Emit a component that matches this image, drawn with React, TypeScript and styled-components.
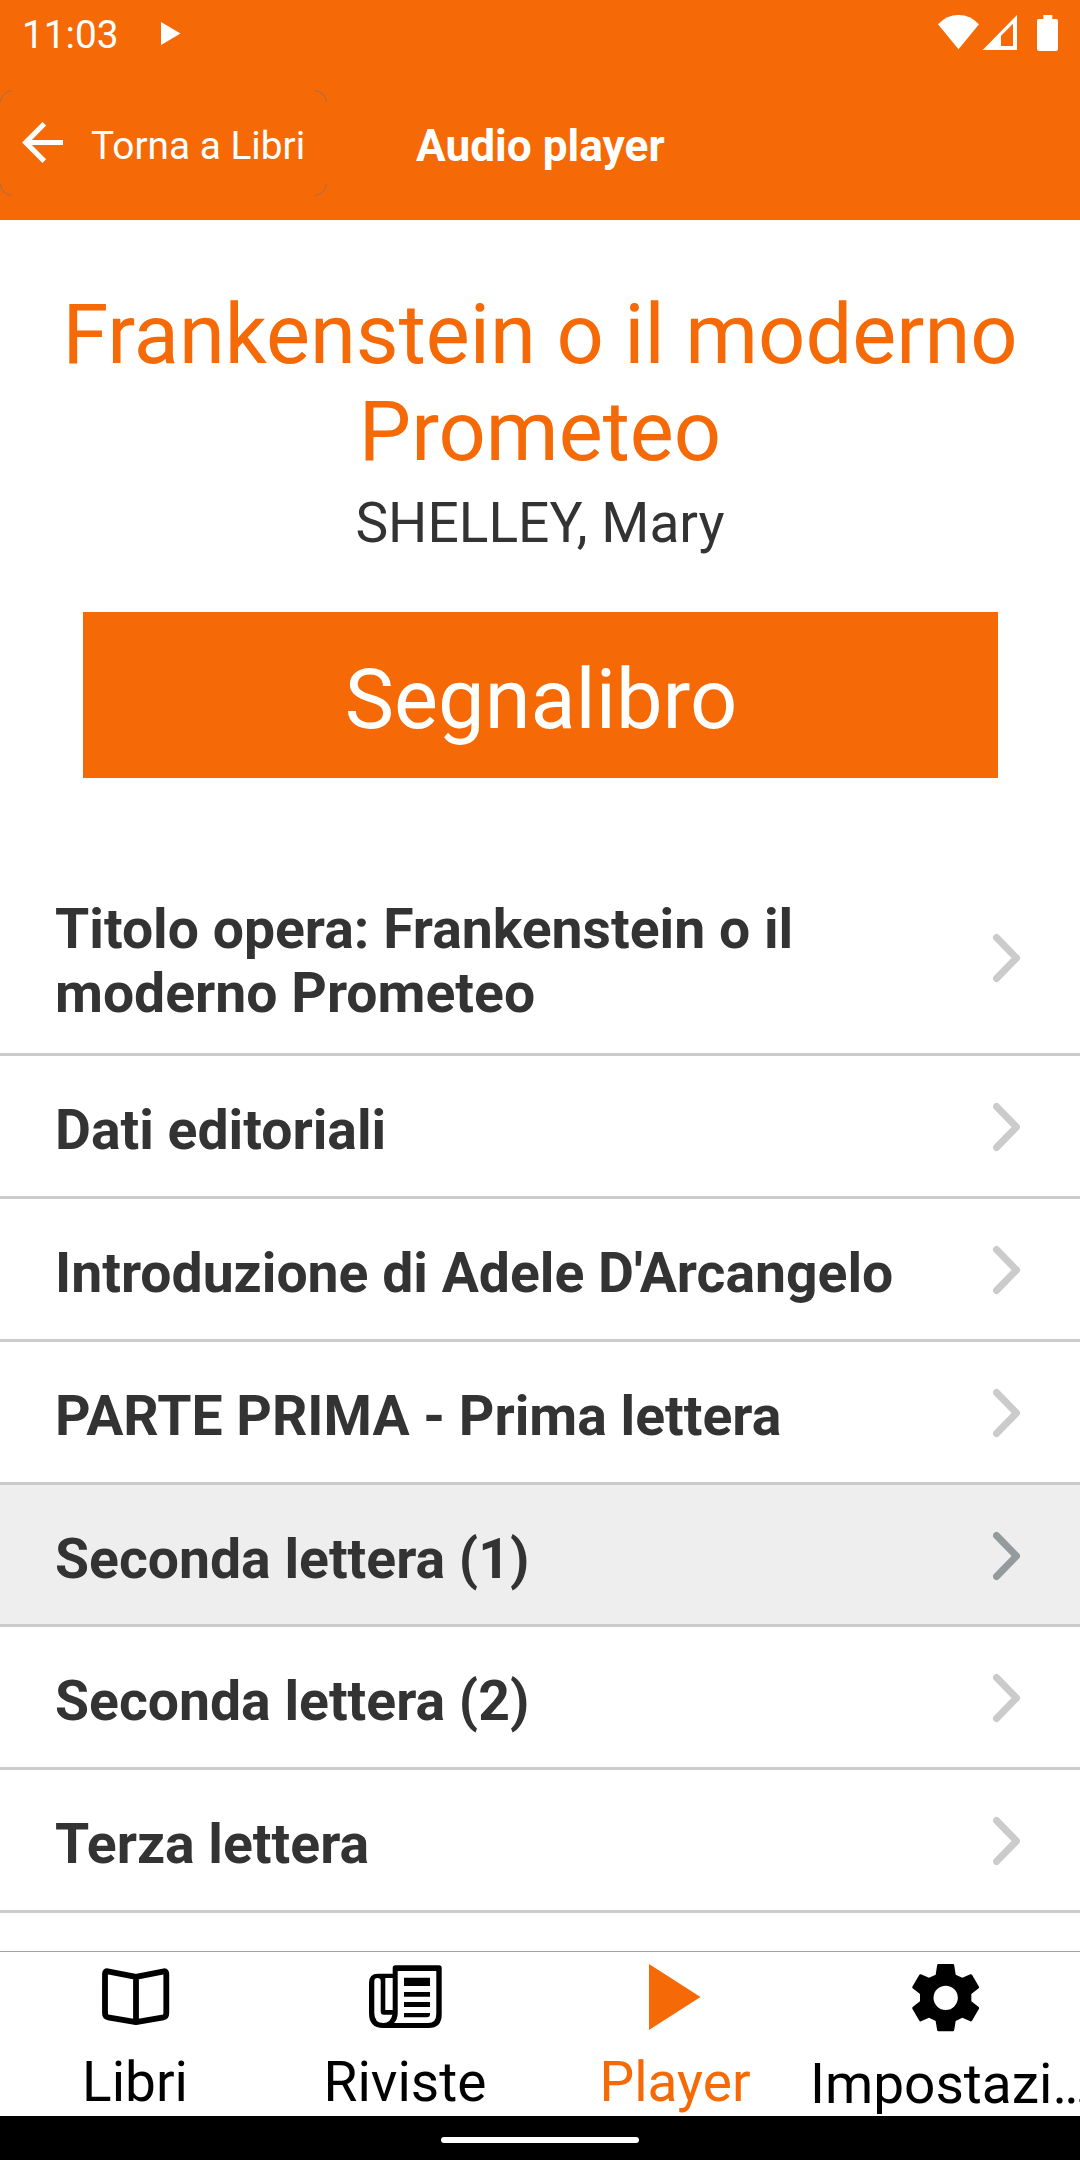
import React from "react";
import styled, { createGlobalStyle } from "styled-components";

const ORANGE = "#f56a06";

const GlobalStyle = createGlobalStyle`
  *, *::before, *::after { box-sizing: border-box; }
  body { margin: 0; background: #fff; font-family: Roboto, "Noto Sans", sans-serif; }
  h1, h2, p, ul { margin: 0; padding: 0; }
  button { border: 0; background: none; padding: 0; font: inherit; color: inherit; }
  svg { display: block; flex: none; }
`;

const Screen = styled.div`
  width: 1080px;
  height: 2160px;
  display: flex;
  flex-direction: column;
  overflow: hidden;
  background: #fff;
`;

const StatusBar = styled.div`
  height: 66px;
  flex: none;
  display: flex;
  align-items: flex-start;
  padding: 12px 22px 0;
  background: ${ORANGE};
  color: #fff;
`;

const Clock = styled.span`
  width: 139px;
  font-size: 38.8px;
  line-height: 45px;
`;

const StatusIcons = styled.div`
  margin-left: auto;
`;

const Header = styled.header`
  height: 154px;
  flex: none;
  display: flex;
  align-items: center;
  background: ${ORANGE};
  color: #fff;
`;

const BackButton = styled.button`
  position: relative;
  width: 327px;
  height: 106px;
  display: flex;
  align-items: center;
  padding-left: 22px;
  font-size: 38.8px;
  line-height: 46px;
`;

const ButtonCorners = styled.svg`
  position: absolute;
  inset: 0;
`;

const BackLabel = styled.span`
  padding: 5px 0 0 28px;
  white-space: nowrap;
`;

const ScreenTitle = styled.h1`
  margin-left: 89px;
  padding-top: 6px;
  font-size: 44.2px;
  line-height: 52px;
  font-weight: 700;
`;

const Content = styled.main`
  flex: 1;
  min-height: 0;
  overflow: hidden;
`;

const BookInfo = styled.section`
  height: 641px;
  padding: 66px 50px 0;
  display: flex;
  flex-direction: column;
  align-items: center;
  text-align: center;
`;

const BookTitle = styled.h2`
  color: ${ORANGE};
  font-size: 83px;
  line-height: 97px;
  font-weight: 400;
`;

const Author = styled.p`
  margin-top: 11px;
  color: #333;
  font-size: 55.1px;
  line-height: 65px;
`;

const BookmarkButton = styled.button`
  width: 915px;
  height: 166px;
  flex: none;
  margin-top: 56px;
  padding: 8px 0 0 2px;
  background: ${ORANGE};
  color: #fff;
  font-size: 83px;
  line-height: 97px;
`;

const ChapterList = styled.ul`
  list-style: none;
`;

const ChapterRow = styled.li<{ $height: number; $active?: boolean }>`
  height: ${({ $height }) => $height}px;
  display: flex;
  align-items: center;
  justify-content: space-between;
  padding: 0 59px 0 55px;
  border-bottom: 3px solid #cbcbcb;
  background: ${({ $active }) => ($active ? "#eee" : "#fff")};
  color: ${({ $active }) => ($active ? "#959a9c" : "#cbcbcb")};

  svg { margin-top: 2px; }
`;

const ChapterTitle = styled.span`
  width: 870px;
  padding-top: 10px;
  color: #333;
  font-size: 55.3px;
  line-height: 64px;
  font-weight: 700;
`;

const TabBar = styled.nav`
  height: 165px;
  flex: none;
  display: grid;
  grid-template-columns: repeat(4, 270px);
  border-top: 1px solid #a2a2a2;
  background: #fff;
`;

const Tab = styled.button<{ $active?: boolean; $drop?: number }>`
  min-width: 0;
  display: flex;
  flex-direction: column;
  align-items: center;
  color: ${({ $active }) => ($active ? ORANGE : "#000")};
  font-size: 55px;
  line-height: 64px;

  svg { margin-bottom: ${({ $drop = 0 }) => 14 + $drop}px; }
`;

const TabLabel = styled.span`
  max-width: 100%;
  white-space: nowrap;
`;

const SystemBar = styled.div`
  height: 44px;
  flex: none;
  padding-top: 21px;
  background: #000;
`;

const HomeIndicator = styled.div`
  width: 198px;
  height: 6px;
  margin: 0 auto;
  border-radius: 3px;
  background: #fff;
`;

const Chevron = () => (
  <svg width="28" height="50" viewBox="0 0 28 50" fill="none" stroke="currentColor" strokeWidth="7" strokeLinecap="round" strokeLinejoin="round">
    <path d="M3.500 4.500 23.500 25 3.500 45.500" />
  </svg>
);

const BookIcon = () => (
  <svg width="72" height="84" viewBox="0 0 72 84" fill="none" stroke="currentColor" strokeWidth="5.800" strokeLinejoin="round">
    <path d="M37 24.800 8.700 19.300Q6 19 6 22V61Q6 64.600 9 65.300L37 70.200 64.500 65.300Q67.300 64.600 67.300 61V22Q67.300 19 65 19.300ZV70.200" />
  </svg>
);

const NewspaperIcon = () => (
  <svg width="76" height="84" viewBox="0 0 76 84" fill="currentColor">
    <path
      fillRule="evenodd"
      d="M25.700 16Q25.700 13.300 28.500 13.300H72Q74.700 13.300 74.700 16V62.500Q74.700 76 61.500 76H16Q2 76 2 61V31Q2 21.700 11 21.700H25.700Z
         M30.700 19V61Q30.700 67 27 71H61Q69.300 71 69.300 62V19Z
         M7.300 29V61Q7.300 71 16.500 71 23.500 71 25.400 62.700H17Q13.700 62.700 13.700 59.500V29Q13.700 26 10.500 26 7.300 26 7.300 29Z
         M18.300 26V58H25.700V26Z"
    />
    <path d="M37 25.700H63V34H37ZM37 40H63V44.700H37ZM37 50H63V55H37ZM37 61H63V62.300Q63 65.300 60 65.300H37Z" />
  </svg>
);

const PlayIcon = () => (
  <svg width="52" height="84" viewBox="0 0 52 84" fill="currentColor">
    <path d="M0 12 51.500 45 0 78Z" />
  </svg>
);

const GearIcon = () => (
  <svg width="72" height="84" viewBox="27 6 216 252" fill="currentColor">
    <path
      fillRule="evenodd"
      d="M115 42H159Q162 42 162.500 45L167 74 187 83 211 73Q214 72 216 74L237 110Q238 113 236 115L214 132V154L236 171Q238 173 237 176L216 212Q214 215 211 214L187 203 167 213 162.500 241Q162 244 159 244H115Q112 244 111.500 241L107 213 87 203 63 214Q60 215 58 212L37 176Q36 173 38 171L60 154V132L38 115Q36 113 37 110L58 74Q60 72 63 73L87 83 107 74 111.500 45Q112 42 115 42Z
         M137 107A36.500 36.500 0 1 0 137 180A36.500 36.500 0 1 0 137 107Z"
    />
  </svg>
);

const BackArrowIcon = () => (
  <svg width="41" height="42" viewBox="4 4 16 16.400" fill="currentColor">
    <path d="M20 11H7.830l5.590-5.590L12 4l-8 8 8 8 1.410-1.410L7.830 13H20z" />
  </svg>
);

const SystemIcons = () => (
  <svg width="128" height="40" viewBox="0 36 384 120" fill="currentColor">
    <path d="M24 73Q50 45 85.500 45T147 73L85.500 148Z" />
    <path fillRule="evenodd" d="M158 150 261 45V150ZM213 107V138H249V71Z" />
    <path d="M340 45H367V57H379Q384 57 384 62V147Q384 153 378 153H327Q321 153 321 147V62Q321 57 326 57H340Z" />
  </svg>
);

const chapters = [
  { title: "Titolo opera: Frankenstein o il moderno Prometeo", height: 195 },
  { title: "Dati editoriali", height: 143 },
  { title: "Introduzione di Adele D'Arcangelo", height: 143 },
  { title: "PARTE PRIMA - Prima lettera", height: 143 },
  { title: "Seconda lettera (1)", height: 142, active: true },
  { title: "Seconda lettera (2)", height: 143 },
  { title: "Terza lettera", height: 143 },
];

export default function App() {
  return (
    <Screen>
      <GlobalStyle />
      <StatusBar>
        <Clock>11:03</Clock>
        <svg width="22" height="34" viewBox="0 0 22 34" fill="currentColor">
          <path d="M0 10 19.500 21.500 0 33Z" />
        </svg>
        <StatusIcons>
          <SystemIcons />
        </StatusIcons>
      </StatusBar>
      <Header>
        <BackButton>
          <ButtonCorners width="327" height="106" viewBox="0 0 327 106" fill="none" stroke="#82726a" strokeOpacity="0.75">
            <path d="M.5 12Q1.500 2 12 .5M315 .5Q325 2 326.500 12M326.500 94Q325 104 315 105.500M12 105.500Q1.500 104 .5 94" />
          </ButtonCorners>
          <BackArrowIcon />
          <BackLabel>Torna a Libri</BackLabel>
        </BackButton>
        <ScreenTitle>Audio player</ScreenTitle>
      </Header>
      <Content>
        <BookInfo>
          <BookTitle>Frankenstein o il moderno Prometeo</BookTitle>
          <Author>SHELLEY, Mary</Author>
          <BookmarkButton>Segnalibro</BookmarkButton>
        </BookInfo>
        <ChapterList>
          {chapters.map((c) => (
            <ChapterRow key={c.title} $height={c.height} $active={c.active}>
              <ChapterTitle>{c.title}</ChapterTitle>
              <Chevron />
            </ChapterRow>
          ))}
        </ChapterList>
      </Content>
      <TabBar>
        <Tab>
          <BookIcon />
          <TabLabel>Libri</TabLabel>
        </Tab>
        <Tab>
          <NewspaperIcon />
          <TabLabel>Riviste</TabLabel>
        </Tab>
        <Tab $active>
          <PlayIcon />
          <TabLabel>Player</TabLabel>
        </Tab>
        <Tab $drop={2}>
          <GearIcon />
          <TabLabel>Impostazi…</TabLabel>
        </Tab>
      </TabBar>
      <SystemBar>
        <HomeIndicator />
      </SystemBar>
    </Screen>
  );
}
